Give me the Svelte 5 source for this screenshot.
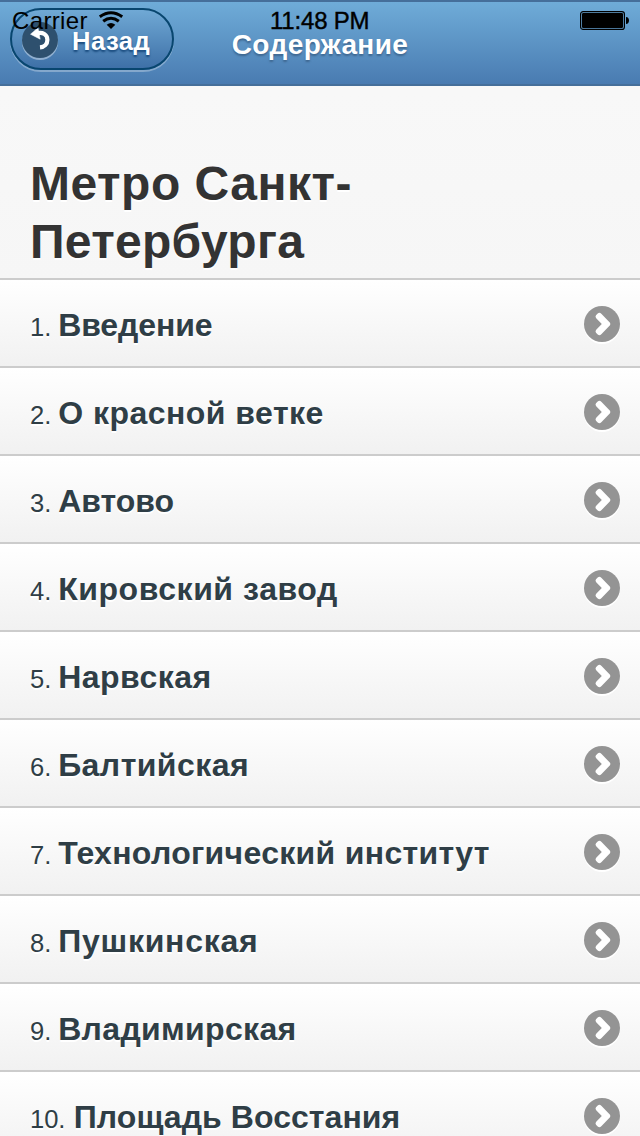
<script>
  const chapters = [
    { title: 'Введение', spacing: -0.1 },
    { title: 'О красной ветке', spacing: 0.48 },
    { title: 'Автово', spacing: 0 },
    { title: 'Кировский завод', spacing: 0.57 },
    { title: 'Нарвская', spacing: 0.5 },
    { title: 'Балтийская', spacing: 0.45 },
    { title: 'Технологический институт', spacing: 0.31 },
    { title: 'Пушкинская', spacing: 0.75 },
    { title: 'Владимирская', spacing: 0.33 },
    { title: 'Площадь Восстания', spacing: 0.06 }
  ];
</script>

<div class="screen">
  <header>
    <button class="back">
      <svg class="back-icon" width="36" height="36" viewBox="0 0 36 36">
        <circle cx="18" cy="20" r="18" fill="#fff" opacity=".4" />
        <circle cx="18" cy="18" r="18" fill="#2e506e" />
        <path d="M14 11.5C21 9.5 25.4 12.6 25.4 17.8C25.4 22.2 22.5 25 18 25.4" fill="none" stroke="#fff" stroke-width="4.2" />
        <path d="M8.5 12.2L16 5.8L18.2 17.2Z" fill="#fff" stroke="#fff" stroke-width=".5" stroke-linejoin="round" />
      </svg>
      <span>Назад</span>
    </button>
    <h1>Содержание</h1>
    <div class="status">
      <span class="carrier">Carrier</span>
      <svg class="wifi" width="26" height="20" viewBox="0 0 26 20">
        <g fill="none" stroke="#000" stroke-width="3">
          <path d="M1.8 5.8Q13-2.4 24.2 5.8" />
          <path d="M5.2 10.2Q13 4.2 20.8 10.2" />
        </g>
        <path d="M8.7 13.7Q13 10.3 17.3 13.7L13 18Z" fill="#000" />
      </svg>
      <time>11:48 PM</time>
      <svg class="battery" width="50" height="20" viewBox="0 0 50 20">
        <rect x=".6" y=".6" width="43.8" height="17.8" rx="2.5" fill="none" stroke="#000" stroke-width="1.2" />
        <rect x="2" y="2" width="41" height="15" rx="1.3" />
        <path d="M46 6C50 6 50 13 46 13Z" />
      </svg>
    </div>
  </header>

  <h2><span class="first">Метро Санкт-</span><br />Петербурга</h2>

  <ol>
    {#each chapters as chapter, i}
      <li>
        <span class="number">{i + 1}.</span>
        <span class="title" style="letter-spacing: {chapter.spacing}px">{chapter.title}</span>
        <svg class="chevron" width="36" height="38" viewBox="0 0 36 38">
          <circle cx="18" cy="20" r="18" fill="#fff" />
          <circle cx="18" cy="18" r="18" fill="#949494" />
          <path d="M13.7 7.5Q15.5 6 17.3 7.7L26 16.8Q26.7 18 26 19.2L17.3 28.3Q15.5 30 13.7 28.5L12 26.8Q10.9 25.3 12.2 23.8L17.8 18L12.2 12.2Q10.9 10.7 12 9.2Z" fill="#fff" />
        </svg>
      </li>
    {/each}
  </ol>
</div>

<style>
  :global(body) { background: #f6f6f6; overflow: hidden; }
  .screen {
    height: 1136px;
    overflow: hidden;
    font-family: "Liberation Sans", Arial, sans-serif;
    background: linear-gradient(#f9f9f9, #f6f6f6 280px);
  }
  header {
    position: relative;
    box-sizing: border-box;
    height: 86px;
    padding: 8px 10px 0;
    display: grid;
    grid-template-columns: 164px 1fr 164px;
    border: solid #456f9a;
    border-width: 2px 0;
    background: linear-gradient(#6facd8, #497bb1);
    color: #fff;
  }
  .back {
    box-sizing: border-box;
    width: 164px;
    height: 62px;
    margin: -2px 0 0;
    padding: 2px 0 0 10px;
    display: flex;
    align-items: center;
    gap: 14px;
    border: 2px solid #08466f;
    border-radius: 31px;
    background: linear-gradient(#70a9d5, #3e70a7);
    box-shadow: 0 2px 0 rgba(255, 255, 255, .3);
    color: #fff;
    font: bold 25.6px/30px "Liberation Sans", Arial, sans-serif;
    letter-spacing: .45px;
    text-shadow: 0 2px 2px #194b7e;
  }
  .back span { padding-top: 2px; }
  .back-icon { overflow: visible; }
  h1 {
    margin: 19px 0 0;
    text-align: center;
    font-size: 28px;
    line-height: 32px;
    letter-spacing: .4px;
    white-space: nowrap;
    text-shadow: 0 2px 2px #3e6790;
  }
  .status {
    position: absolute;
    inset: 6px 10px auto 12px;
    height: 26px;
    color: #000;
    font-size: 24px;
    line-height: 26px;
  }
  .carrier { letter-spacing: .35px; }
  .wifi { position: absolute; left: 86px; top: 3px; }
  time { position: absolute; left: 258px; top: 0; letter-spacing: -.2px; -webkit-text-stroke: .4px #000; white-space: nowrap; }
  .battery { position: absolute; left: 568px; top: 3px; }
  h2 {
    margin: 0;
    padding: 69px 30px 7px;
    color: #333;
    font-size: 48px;
    line-height: 58px;
    letter-spacing: .3px;
    text-shadow: 0 2px 0 #fff;
  }
  .first { letter-spacing: .5px; }
  ol { margin: 0; padding: 0; list-style: none; }
  li {
    box-sizing: border-box;
    height: 88px;
    padding: 0 20px 0 30px;
    display: flex;
    align-items: baseline;
    border-top: 2px solid #ccc;
    background: linear-gradient(#fff, #f1f1f1);
    color: #2f3e46;
    line-height: 90px;
    text-shadow: 0 2px 0 #fff;
    white-space: nowrap;
  }
  .number { margin-right: 7px; font-size: 25.6px; letter-spacing: -.1px; }
  li:nth-child(10) .number { margin-right: 8.5px; }
  .title { font-size: 32px; font-weight: bold; }
  .chevron { margin-left: auto; align-self: flex-start; margin-top: 26px; }
</style>
